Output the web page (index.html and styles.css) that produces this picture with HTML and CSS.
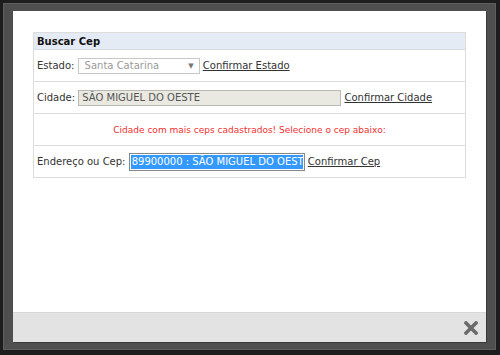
FILE: index.html
```html
<!DOCTYPE html>
<html lang="pt-BR">
<head>
    <meta charset="UTF-8">
    <title>Buscar Cep</title>
    <link rel="stylesheet" href="styles.css">
</head>
<body>
    <div class="frame">
        <div class="dialog">
            <div class="content">
                <table class="busca">
                    <tr><th>Buscar Cep</th></tr>
                    <tr>
                        <td>
                            Estado:
                            <span class="combo">Santa Catarina<span class="arrow">&#9660;</span></span>
                            <a href="#">Confirmar Estado</a>
                        </td>
                    </tr>
                    <tr>
                        <td>
                            Cidade:
                            <span class="campo">SÃO MIGUEL DO OESTE</span>
                            <a href="#">Confirmar Cidade</a>
                        </td>
                    </tr>
                    <tr>
                        <td class="aviso">Cidade com mais ceps cadastrados! Selecione o cep abaixo:</td>
                    </tr>
                    <tr>
                        <td>
                            Endereço ou Cep:
                            <span class="lista"><span class="escolhido">89900000 : SÃO MIGUEL DO OEST</span></span>
                            <a href="#">Confirmar Cep</a>
                        </td>
                    </tr>
                </table>
            </div>
            <div class="footer">
                <svg class="fechar" width="14" height="14" viewBox="0 0 14 14">
                    <path d="M2 2 L12 12 M12 2 L2 12" stroke="#6b6b6b" stroke-width="3.6" stroke-linecap="square"/>
                </svg>
            </div>
        </div>
    </div>
</body>
</html>
```

FILE: styles.css
```css
html, body {
    margin: 0;
    padding: 0;
    background: #1d1d1d;
}
body {
    font-family: "DejaVu Sans", Verdana, sans-serif;
    font-size: 10px;
    color: #333;
}
.frame {
    margin: 3px;
    width: 493px;
    height: 347px;
    box-sizing: border-box;
    padding: 7px 9px;
    background: #4f4f4f;
    border: 1px solid #5e5e5e;
}
.dialog {
    display: flex;
    flex-direction: column;
    height: 100%;
    background: #fff;
    box-shadow: 1px 1px 0 #3a3a3a;
}
.content {
    flex: 1;
    padding: 21px 20px 0 20px;
}
.busca {
    width: 100%;
    border-collapse: collapse;
    border: 1px solid #dcdcdc;
}
.busca th {
    text-align: left;
    height: 16px;
    padding: 0 3px;
    background: #e5ebf4;
    color: #111;
    font-weight: bold;
    border-bottom: 1px solid #d6dbe3;
}
.busca td {
    height: 31px;
    padding: 0 3px;
    border-bottom: 1px solid #dcdcdc;
    white-space: nowrap;
}
.busca a {
    color: #333;
}
.combo {
    display: inline-block;
    position: relative;
    width: 110px;
    height: 14px;
    line-height: 14px;
    padding: 0 4px 0 6px;
    border: 1px solid #c8c8c8;
    color: #9a9a9a;
    vertical-align: middle;
}
.arrow {
    position: absolute;
    right: 5px;
    top: 0;
    font-size: 7px;
    color: #777;
}
.campo {
    display: inline-block;
    width: 255px;
    height: 14px;
    line-height: 14px;
    padding: 0 3px;
    background: #e9e9e1;
    border: 1px solid #b9b9b1;
    color: #555;
    vertical-align: middle;
}
.lista {
    display: inline-block;
    width: 172px;
    height: 14px;
    line-height: 14px;
    padding: 1px;
    border: 1px solid #888;
    overflow: hidden;
    vertical-align: middle;
}
.escolhido {
    display: block;
    padding: 0 1px;
    background: #3399ff;
    color: #fff;
    overflow: hidden;
    text-overflow: clip;
}
.busca td.aviso {
    text-align: center;
    color: #f03030;
    font-size: 9px;
}
.footer {
    height: 29px;
    background: #e3e3e3;
    border-top: 1px solid #d8d8d8;
    display: flex;
    justify-content: flex-end;
    align-items: center;
    padding-right: 8px;
}
```
